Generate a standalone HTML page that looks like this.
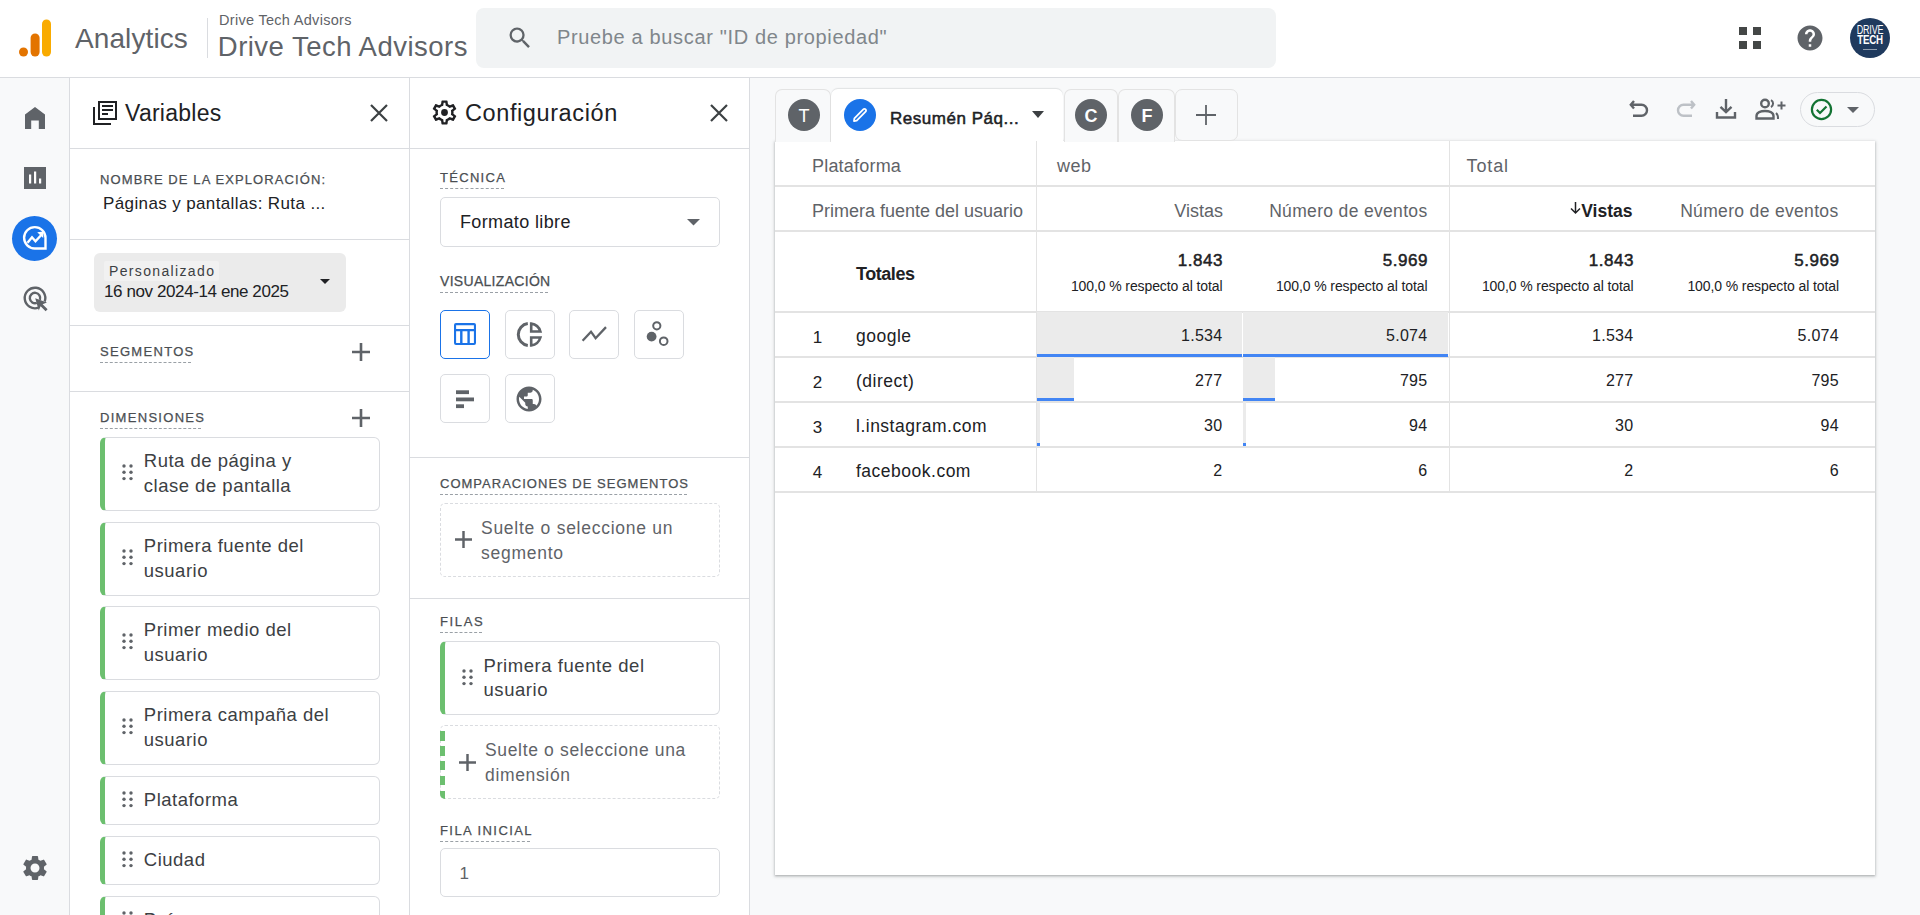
<!DOCTYPE html>
<html lang="es">
<head>
<meta charset="utf-8">
<title>Analytics</title>
<style>
*{box-sizing:border-box;margin:0;padding:0}
html,body{width:1920px;height:915px;overflow:hidden;background:#fff;font-family:"Liberation Sans",sans-serif;color:#202124}
.abs{position:absolute}
.t{position:absolute;white-space:nowrap}
.med{-webkit-text-stroke:0.25px currentColor}
.med5{-webkit-text-stroke:0.5px currentColor}
svg{position:absolute;overflow:visible}
</style>
</head>
<body>

<div class="abs" style="left:0px;top:0px;width:1920px;height:77px;background:#fff"></div>
<div class="abs" style="left:0px;top:77px;width:1920px;height:1px;background:#dadce0"></div>
<div class="abs" style="left:0px;top:78px;width:69px;height:837px;background:#f8f9fa"></div>
<div class="abs" style="left:69px;top:78px;width:1px;height:837px;background:#dadce0"></div>
<div class="abs" style="left:70px;top:78px;width:339px;height:837px;background:#fff"></div>
<div class="abs" style="left:409px;top:78px;width:1px;height:837px;background:#dadce0"></div>
<div class="abs" style="left:410px;top:78px;width:339px;height:837px;background:#fff"></div>
<div class="abs" style="left:749px;top:78px;width:1px;height:837px;background:#dadce0"></div>
<div class="abs" style="left:750px;top:78px;width:1170px;height:837px;background:#f8f9fa"></div>
<svg style="left:18px;top:19px" width="34" height="38" viewBox="0 0 34 38">
<circle cx="5.5" cy="33" r="4.5" fill="#e37400"/>
<rect x="12.6" y="14.5" width="9" height="23" rx="4.5" fill="#e37400"/>
<rect x="24" y="0.5" width="9" height="37" rx="4.5" fill="#f9ab00"/>
</svg>
<div class="t" style="top:25.20px;font-size:28px;line-height:28px;color:#5f6368;letter-spacing:0.1px;left:75.00px;">Analytics</div>
<div class="abs" style="left:207px;top:18px;width:1px;height:40px;background:#dadce0"></div>
<div class="t" style="top:12.68px;font-size:14.5px;line-height:14.5px;color:#5f6368;letter-spacing:0.3px;left:219.00px;">Drive Tech Advisors</div>
<div class="t" style="top:33.12px;font-size:27.5px;line-height:27.5px;color:#5f6368;letter-spacing:0.48px;left:217.80px;">Drive Tech Advisors</div>
<div class="abs" style="left:476px;top:8px;width:800px;height:60px;background:#f1f3f4;border-radius:8px"></div>
<svg style="left:506px;top:24px" width="28" height="28" viewBox="0 0 24 24"><path fill="#5f6368" d="M15.5 14h-.79l-.28-.27A6.471 6.471 0 0 0 16 9.5 6.5 6.5 0 1 0 9.5 16c1.61 0 3.09-.59 4.23-1.57l.27.28v.79l5 4.99L20.49 19l-4.99-5zm-6 0C7.01 14 5 11.99 5 9.5S7.01 5 9.5 5 14 7.01 14 9.5 11.99 14 9.5 14z"/></svg>
<div class="t" style="top:26.50px;font-size:20px;line-height:20px;color:#80868b;letter-spacing:0.65px;left:557.00px;">Pruebe a buscar "ID de propiedad"</div>
<div class="abs" style="left:1739px;top:27px;width:8px;height:8px;background:#444746"></div>
<div class="abs" style="left:1753px;top:27px;width:8px;height:8px;background:#444746"></div>
<div class="abs" style="left:1739px;top:41px;width:8px;height:8px;background:#444746"></div>
<div class="abs" style="left:1753px;top:41px;width:8px;height:8px;background:#444746"></div>
<svg style="left:1795px;top:23px" width="30" height="30" viewBox="0 0 24 24"><path fill="#5f6368" d="M12 2C6.48 2 2 6.48 2 12s4.48 10 10 10 10-4.48 10-10S17.52 2 12 2zm1 17h-2v-2h2v2zm2.07-7.75l-.9.92C13.45 12.9 13 13.5 13 15h-2v-.5c0-1.1.45-2.1 1.17-2.83l1.24-1.26c.37-.36.59-.86.59-1.41 0-1.1-.9-2-2-2s-2 .9-2 2H8c0-2.21 1.79-4 4-4s4 1.79 4 4c0 .88-.36 1.68-.93 2.25z"/></svg>
<div class="abs" style="left:1850px;top:18px;width:40px;height:40px;background:#1f3a5e;border-radius:50%"></div>
<div class="t" style="left:1850px;top:25px;width:40px;text-align:center;font-size:12.5px;line-height:10px;color:#fff;transform:scaleX(0.72);letter-spacing:-0.3px">DRIVE<br><b style="font-size:13.5px">TECH</b></div>
<div class="abs" style="left:1863px;top:49px;width:14px;height:1px;background:rgba(255,255,255,.5)"></div>
<svg style="left:25px;top:107px" width="20" height="22" viewBox="0 0 20 22"><path fill="#5f6368" d="M0 7.5 L10 0 L20 7.5 V22 H13.8 V13.6 H6.2 V22 H0 Z"/></svg>
<svg style="left:24px;top:167px" width="22" height="22" viewBox="0 0 22 22"><rect width="22" height="22" fill="#5f6368"/><rect x="5" y="7.5" width="2.2" height="9" fill="#fff"/><rect x="10" y="4.5" width="2.2" height="12" fill="#fff"/><rect x="15" y="11.5" width="2.2" height="5" fill="#fff"/></svg>
<div class="abs" style="left:12px;top:216px;width:45px;height:45px;background:#1a73e8;border-radius:50%"></div>
<svg style="left:22px;top:225px" width="26" height="26" viewBox="0 0 26 26">
<path fill="none" stroke="#fff" stroke-width="2.4" stroke-linejoin="miter" d="M23.5 12.8 A10.7 10.7 0 1 0 12.8 23.5 H23.5 Z"/>
<path fill="none" stroke="#fff" stroke-width="2.4" d="M5.5 17.8 L10 12.3 L13.5 16.3 L19.5 9.8"/>
<path fill="#fff" d="M15.2 7.2 L21.6 6.6 L21.2 13 Z"/>
</svg>
<svg style="left:22px;top:285px" width="27" height="27" viewBox="0 0 27 27">
<path fill="none" stroke="#5f6368" stroke-width="2.4" d="M22.7 16.5 A10.3 10.3 0 1 0 16.5 22.7"/>
<path fill="none" stroke="#5f6368" stroke-width="2.4" d="M17.9 14.8 A5.2 5.2 0 1 0 14.8 17.9"/>
<path fill="#5f6368" d="M13.2 13.2 L25 17.4 L20.6 19.3 L25.6 24.3 L23.6 26.3 L18.6 21.3 L16.8 25.6 Z"/>
</svg>
<svg style="left:20px;top:853px" width="30" height="30" viewBox="0 0 24 24"><path fill="#5f6368" d="M19.14 12.94c.04-.3.06-.61.06-.94 0-.32-.02-.64-.07-.94l2.03-1.58a.49.49 0 0 0 .12-.61l-1.92-3.32a.488.488 0 0 0-.59-.22l-2.39.96c-.5-.38-1.03-.7-1.62-.94l-.36-2.54a.484.484 0 0 0-.48-.41h-3.84c-.24 0-.43.17-.47.41l-.36 2.54c-.59.24-1.13.57-1.62.94l-2.39-.96c-.22-.08-.47 0-.59.22L2.74 8.87c-.12.21-.08.47.12.61l2.03 1.58c-.05.3-.09.63-.09.94s.02.64.07.94l-2.03 1.58a.49.49 0 0 0-.12.61l1.92 3.32c.12.22.37.29.59.22l2.39-.96c.5.38 1.03.7 1.62.94l.36 2.54c.05.24.24.41.48.41h3.84c.24 0 .44-.17.47-.41l.36-2.54c.59-.24 1.13-.56 1.62-.94l2.39.96c.22.08.47 0 .59-.22l1.92-3.32c.12-.22.07-.47-.12-.61l-2.01-1.58zM12 15.6c-1.98 0-3.6-1.62-3.6-3.6s1.62-3.6 3.6-3.6 3.6 1.62 3.6 3.6-1.62 3.6-3.6 3.6z"/></svg>
<svg style="left:92px;top:100px" width="26" height="26" viewBox="0 0 26 26">
<path fill="none" stroke="#202124" stroke-width="2" d="M2 7 V24 H19"/>
<rect x="7" y="2" width="17" height="17" fill="none" stroke="#202124" stroke-width="2"/>
<rect x="10" y="5" width="11" height="2" fill="#202124"/>
<rect x="10" y="9" width="11" height="2" fill="#202124"/>
<rect x="10" y="13" width="6" height="2" fill="#202124"/>
</svg>
<div class="t" style="top:102.25px;font-size:23px;line-height:23px;color:#202124;letter-spacing:0.26px;left:125.00px;">Variables</div>
<svg style="left:370px;top:104px" width="18" height="18" viewBox="0 0 18 18"><path stroke="#3c4043" stroke-width="2.2" d="M1 1 L17 17 M17 1 L1 17"/></svg>
<div class="abs" style="left:70px;top:148px;width:339px;height:1px;background:#dadce0"></div>
<div class="t med" style="top:172.65px;font-size:13px;line-height:13px;color:#4a4e52;letter-spacing:1.1px;left:100.00px;">NOMBRE DE LA EXPLORACIÓN:</div>
<div class="t" style="top:194.55px;font-size:17px;line-height:17px;color:#202124;letter-spacing:0.38px;left:103.00px;">Páginas y pantallas: Ruta ...</div>
<div class="abs" style="left:70px;top:239px;width:339px;height:1px;background:#dadce0"></div>
<div class="abs" style="left:94px;top:253px;width:252px;height:59px;background:#ebebeb;border-radius:6px"></div>
<div class="abs" style="left:104px;top:261px;width:115px;height:20px;background:#f1f1f1;border-radius:2px"></div>
<div class="t" style="top:264.10px;font-size:14px;line-height:14px;color:#3c4043;letter-spacing:1.35px;left:109.00px;">Personalizado</div>
<div class="t" style="top:282.55px;font-size:17px;line-height:17px;color:#202124;letter-spacing:-0.4px;left:104.00px;">16 nov 2024-14 ene 2025</div>
<svg style="left:320px;top:279px" width="10" height="6" viewBox="0 0 10 6"><path fill="#202124" d="M0 0 H10 L5 5 Z"/></svg>
<div class="abs" style="left:70px;top:325px;width:339px;height:1px;background:#dadce0"></div>
<div class="t med" style="top:344.95px;font-size:13px;line-height:13px;color:#4a4e52;letter-spacing:1.3px;left:100.00px;">SEGMENTOS</div>
<div class="abs" style="left:100px;top:361.7px;width:91px;height:0;border-top:1.5px dashed #9aa0a6"></div>
<svg style="left:352px;top:343px" width="18" height="18" viewBox="0 0 18 18"><path fill="#5f6368" d="M7.7 0 H10.3 V7.7 H18 V10.3 H10.3 V18 H7.7 V10.3 H0 V7.7 H7.7 Z"/></svg>
<div class="abs" style="left:70px;top:391px;width:339px;height:1px;background:#dadce0"></div>
<div class="t med" style="top:410.95px;font-size:13px;line-height:13px;color:#4a4e52;letter-spacing:1.3px;left:100.00px;">DIMENSIONES</div>
<div class="abs" style="left:100px;top:427.7px;width:101px;height:0;border-top:1.5px dashed #9aa0a6"></div>
<svg style="left:352px;top:409px" width="18" height="18" viewBox="0 0 18 18"><path fill="#5f6368" d="M7.7 0 H10.3 V7.7 H18 V10.3 H10.3 V18 H7.7 V10.3 H0 V7.7 H7.7 Z"/></svg>
<div class="abs" style="left:100px;top:437px;width:280px;height:74px;background:#fff;border:1px solid #dadce0;border-radius:6px;border-left:5px solid #6cbf6f"></div>
<svg style="left:122px;top:464.4px" width="12" height="17" viewBox="0 0 12 17"><g fill="#5f6368"><circle cx="2" cy="2" r="1.7"/><circle cx="9" cy="2" r="1.7"/><circle cx="2" cy="8.3" r="1.7"/><circle cx="9" cy="8.3" r="1.7"/><circle cx="2" cy="14.6" r="1.7"/><circle cx="9" cy="14.6" r="1.7"/></g></svg>
<div class="t" style="top:452.27px;font-size:18.5px;line-height:18.5px;color:#3c4043;letter-spacing:0.5px;left:143.80px;">Ruta de página y</div>
<div class="t" style="top:476.57px;font-size:18.5px;line-height:18.5px;color:#3c4043;letter-spacing:0.5px;left:143.80px;">clase de pantalla</div>
<div class="abs" style="left:100px;top:522px;width:280px;height:74px;background:#fff;border:1px solid #dadce0;border-radius:6px;border-left:5px solid #6cbf6f"></div>
<svg style="left:122px;top:549.4px" width="12" height="17" viewBox="0 0 12 17"><g fill="#5f6368"><circle cx="2" cy="2" r="1.7"/><circle cx="9" cy="2" r="1.7"/><circle cx="2" cy="8.3" r="1.7"/><circle cx="9" cy="8.3" r="1.7"/><circle cx="2" cy="14.6" r="1.7"/><circle cx="9" cy="14.6" r="1.7"/></g></svg>
<div class="t" style="top:537.27px;font-size:18.5px;line-height:18.5px;color:#3c4043;letter-spacing:0.5px;left:143.80px;">Primera fuente del</div>
<div class="t" style="top:561.57px;font-size:18.5px;line-height:18.5px;color:#3c4043;letter-spacing:0.5px;left:143.80px;">usuario</div>
<div class="abs" style="left:100px;top:606px;width:280px;height:74px;background:#fff;border:1px solid #dadce0;border-radius:6px;border-left:5px solid #6cbf6f"></div>
<svg style="left:122px;top:633.4px" width="12" height="17" viewBox="0 0 12 17"><g fill="#5f6368"><circle cx="2" cy="2" r="1.7"/><circle cx="9" cy="2" r="1.7"/><circle cx="2" cy="8.3" r="1.7"/><circle cx="9" cy="8.3" r="1.7"/><circle cx="2" cy="14.6" r="1.7"/><circle cx="9" cy="14.6" r="1.7"/></g></svg>
<div class="t" style="top:621.27px;font-size:18.5px;line-height:18.5px;color:#3c4043;letter-spacing:0.5px;left:143.80px;">Primer medio del</div>
<div class="t" style="top:645.57px;font-size:18.5px;line-height:18.5px;color:#3c4043;letter-spacing:0.5px;left:143.80px;">usuario</div>
<div class="abs" style="left:100px;top:691px;width:280px;height:74px;background:#fff;border:1px solid #dadce0;border-radius:6px;border-left:5px solid #6cbf6f"></div>
<svg style="left:122px;top:718.4px" width="12" height="17" viewBox="0 0 12 17"><g fill="#5f6368"><circle cx="2" cy="2" r="1.7"/><circle cx="9" cy="2" r="1.7"/><circle cx="2" cy="8.3" r="1.7"/><circle cx="9" cy="8.3" r="1.7"/><circle cx="2" cy="14.6" r="1.7"/><circle cx="9" cy="14.6" r="1.7"/></g></svg>
<div class="t" style="top:706.27px;font-size:18.5px;line-height:18.5px;color:#3c4043;letter-spacing:0.5px;left:143.80px;">Primera campaña del</div>
<div class="t" style="top:730.57px;font-size:18.5px;line-height:18.5px;color:#3c4043;letter-spacing:0.5px;left:143.80px;">usuario</div>
<div class="abs" style="left:100px;top:776px;width:280px;height:49px;background:#fff;border:1px solid #dadce0;border-radius:6px;border-left:5px solid #6cbf6f"></div>
<svg style="left:122px;top:790.9px" width="12" height="17" viewBox="0 0 12 17"><g fill="#5f6368"><circle cx="2" cy="2" r="1.7"/><circle cx="9" cy="2" r="1.7"/><circle cx="2" cy="8.3" r="1.7"/><circle cx="9" cy="8.3" r="1.7"/><circle cx="2" cy="14.6" r="1.7"/><circle cx="9" cy="14.6" r="1.7"/></g></svg>
<div class="t" style="top:790.88px;font-size:18.5px;line-height:18.5px;color:#3c4043;letter-spacing:0.5px;left:143.80px;">Plataforma</div>
<div class="abs" style="left:100px;top:836px;width:280px;height:49px;background:#fff;border:1px solid #dadce0;border-radius:6px;border-left:5px solid #6cbf6f"></div>
<svg style="left:122px;top:850.9px" width="12" height="17" viewBox="0 0 12 17"><g fill="#5f6368"><circle cx="2" cy="2" r="1.7"/><circle cx="9" cy="2" r="1.7"/><circle cx="2" cy="8.3" r="1.7"/><circle cx="9" cy="8.3" r="1.7"/><circle cx="2" cy="14.6" r="1.7"/><circle cx="9" cy="14.6" r="1.7"/></g></svg>
<div class="t" style="top:850.88px;font-size:18.5px;line-height:18.5px;color:#3c4043;letter-spacing:0.5px;left:143.80px;">Ciudad</div>
<div class="abs" style="left:100px;top:896px;width:280px;height:49px;background:#fff;border:1px solid #dadce0;border-radius:6px;border-left:5px solid #6cbf6f"></div>
<svg style="left:122px;top:910.9px" width="12" height="17" viewBox="0 0 12 17"><g fill="#5f6368"><circle cx="2" cy="2" r="1.7"/><circle cx="9" cy="2" r="1.7"/><circle cx="2" cy="8.3" r="1.7"/><circle cx="9" cy="8.3" r="1.7"/><circle cx="2" cy="14.6" r="1.7"/><circle cx="9" cy="14.6" r="1.7"/></g></svg>
<div class="t" style="top:910.88px;font-size:18.5px;line-height:18.5px;color:#3c4043;letter-spacing:0.5px;left:143.80px;">País</div>
<svg style="left:430px;top:98px" width="29" height="29" viewBox="0 0 24 24"><path fill="#202124" d="M19.43 12.98c.04-.32.07-.64.07-.98s-.03-.66-.07-.98l2.11-1.65c.19-.15.24-.42.12-.64l-2-3.46a.5.5 0 0 0-.61-.22l-2.49 1c-.52-.4-1.08-.73-1.69-.98l-.38-2.65A.488.488 0 0 0 14 2h-4c-.25 0-.46.18-.49.42l-.38 2.65c-.61.25-1.17.59-1.69.98l-2.49-1a.566.566 0 0 0-.18-.03c-.17 0-.34.09-.43.25l-2 3.46c-.13.22-.07.49.12.64l2.11 1.65c-.04.32-.07.65-.07.98s.03.66.07.98l-2.11 1.65c-.19.15-.24.42-.12.64l2 3.46a.5.5 0 0 0 .61.22l2.49-1c.52.4 1.08.73 1.69.98l.38 2.65c.03.24.24.42.49.42h4c.25 0 .46-.18.49-.42l.38-2.65c.61-.25 1.17-.59 1.69-.98l2.49 1c.06.02.12.03.18.03.17 0 .34-.09.43-.25l2-3.46c.12-.22.07-.49-.12-.64l-2.11-1.65zm-1.98-1.71c.04.31.05.52.05.73 0 .21-.02.43-.05.73l-.14 1.13.89.7 1.08.84-.7 1.21-1.27-.51-1.04-.42-.9.68c-.43.32-.84.56-1.25.73l-1.06.43-.16 1.13-.2 1.35h-1.4l-.19-1.35-.16-1.13-1.06-.43c-.43-.18-.83-.41-1.23-.71l-.91-.7-1.06.43-1.27.51-.7-1.21 1.08-.84.89-.7-.14-1.13c-.03-.31-.05-.54-.05-.74s.02-.43.05-.73l.14-1.13-.89-.7-1.08-.84.7-1.21 1.27.51 1.04.42.9-.68c.43-.32.84-.56 1.25-.73l1.06-.43.16-1.13.2-1.35h1.39l.19 1.35.16 1.13 1.06.43c.43.18.83.41 1.23.71l.91.7 1.06-.43 1.27-.51.7 1.21-1.07.85-.89.7.14 1.13z"/><circle cx="12" cy="12" r="2.8" fill="#202124"/></svg>
<div class="t" style="top:101.62px;font-size:23.5px;line-height:23.5px;color:#202124;letter-spacing:0.6px;left:465.00px;">Configuración</div>
<svg style="left:710px;top:104px" width="18" height="18" viewBox="0 0 18 18"><path stroke="#3c4043" stroke-width="2.2" d="M1 1 L17 17 M17 1 L1 17"/></svg>
<div class="abs" style="left:410px;top:148px;width:339px;height:1px;background:#dadce0"></div>
<div class="t med" style="top:170.95px;font-size:13px;line-height:13px;color:#4a4e52;letter-spacing:1.3px;left:440.00px;">TÉCNICA</div>
<div class="abs" style="left:440px;top:187.7px;width:64px;height:0;border-top:1.5px dashed #9aa0a6"></div>
<div class="abs" style="left:440px;top:197px;width:280px;height:50px;background:#fff;border:1px solid #dadce0;border-radius:5px"></div>
<div class="t" style="top:212.90px;font-size:18px;line-height:18px;color:#202124;letter-spacing:0.37px;left:460.00px;">Formato libre</div>
<svg style="left:687px;top:219px" width="13" height="7" viewBox="0 0 13 7"><path fill="#5f6368" d="M0 0 H13 L6.5 6.5 Z"/></svg>
<div class="t med" style="top:274.10px;font-size:14px;line-height:14px;color:#4a4e52;letter-spacing:0.3px;left:440.00px;">VISUALIZACIÓN</div>
<div class="abs" style="left:440px;top:291.5px;width:108px;height:0;border-top:1.5px dashed #9aa0a6"></div>
<div class="abs" style="left:440px;top:310px;width:50px;height:49px;background:#fff;border:1px solid #1a73e8;border-radius:5px"></div>
<div class="abs" style="left:505px;top:310px;width:50px;height:49px;background:#fff;border:1px solid #dadce0;border-radius:5px"></div>
<div class="abs" style="left:569px;top:310px;width:50px;height:49px;background:#fff;border:1px solid #dadce0;border-radius:5px"></div>
<div class="abs" style="left:634px;top:310px;width:50px;height:49px;background:#fff;border:1px solid #dadce0;border-radius:5px"></div>
<div class="abs" style="left:440px;top:374px;width:50px;height:49px;background:#fff;border:1px solid #dadce0;border-radius:5px"></div>
<div class="abs" style="left:505px;top:374px;width:50px;height:49px;background:#fff;border:1px solid #dadce0;border-radius:5px"></div>
<svg style="left:453.9px;top:322.9px" width="22" height="22" viewBox="0 0 22 22"><path fill="#1a73e8" fill-rule="evenodd" d="M2 0 H20 Q22 0 22 2 V20 Q22 22 20 22 H2 Q0 22 0 20 V2 Q0 0 2 0 Z M2.1 2.3 H19.9 V6.1 H2.1 Z M2.1 8.3 H6.1 V19.9 H2.1 Z M8.5 8.3 H13.4 V19.9 H8.5 Z M15.8 8.3 H19.9 V19.9 H15.8 Z"/></svg>
<svg style="left:516.8px;top:321.7px" width="25" height="25" viewBox="0 0 25 25"><g fill="none" stroke="#5f6368" stroke-width="3"><path d="M10.8 1.6 A11 11 0 0 0 10.8 23.4"/><path d="M14.2 1.6 V9.5 H23.4 A11 11 0 0 0 14.2 1.6 Z" stroke-width="2.6"/><path d="M14.2 23.4 V15.5 H23.4 A11 11 0 0 1 14.2 23.4 Z" stroke-width="2.6"/></g></svg>
<svg style="left:580px;top:325px" width="28" height="18" viewBox="0 0 28 18"><path fill="none" stroke="#5f6368" stroke-width="2.3" d="M2.6 15.8 L11 6.7 L15.6 13.2 L26 2.1"/></svg>
<svg style="left:645px;top:319px" width="26" height="28" viewBox="0 0 26 28"><circle cx="11.8" cy="6.8" r="3.6" fill="none" stroke="#5f6368" stroke-width="2"/><circle cx="6.6" cy="17.6" r="4.9" fill="#5f6368"/><circle cx="18.7" cy="22.2" r="3.8" fill="none" stroke="#5f6368" stroke-width="2"/></svg>
<svg style="left:453px;top:387px" width="24" height="24" viewBox="0 0 24 24"><rect x="3" y="3.3" width="13" height="3.8" fill="#5f6368"/><rect x="3" y="10.5" width="18" height="3.8" fill="#5f6368"/><rect x="3" y="17.3" width="8" height="3.8" fill="#5f6368"/></svg>
<svg style="left:513.5px;top:384.2px" width="30" height="30" viewBox="0 0 24 24"><path fill="#5f6368" d="M12 2C6.48 2 2 6.48 2 12s4.48 10 10 10 10-4.48 10-10S17.52 2 12 2zm-1 17.93c-3.95-.49-7-3.85-7-7.93 0-.62.08-1.21.21-1.79L9 15v1c0 1.1.9 2 2 2v1.93zm6.9-2.54c-.26-.81-1-1.39-1.9-1.39h-1v-3c0-.55-.45-1-1-1H8v-2h2c.55 0 1-.45 1-1V7h2c1.1 0 2-.9 2-2v-.41c2.93 1.19 5 4.06 5 7.41 0 2.08-.8 3.97-2.1 5.39z"/></svg>
<div class="abs" style="left:410px;top:457px;width:339px;height:1px;background:#dadce0"></div>
<div class="t med" style="top:476.95px;font-size:13px;line-height:13px;color:#4a4e52;letter-spacing:1.01px;left:440.00px;">COMPARACIONES DE SEGMENTOS</div>
<div class="abs" style="left:440px;top:493.7px;width:247px;height:0;border-top:1.5px dashed #9aa0a6"></div>
<div class="abs" style="left:440px;top:503px;width:280px;height:74px;background:#fff;border:1px dashed #dadce0;border-radius:5px"></div>
<svg style="left:455px;top:531px" width="17" height="17" viewBox="0 0 18 18"><path fill="#5f6368" d="M7.7 0 H10.3 V7.7 H18 V10.3 H10.3 V18 H7.7 V10.3 H0 V7.7 H7.7 Z"/></svg>
<div class="t" style="top:520.33px;font-size:17.5px;line-height:17.5px;color:#5f6368;letter-spacing:0.73px;left:481.00px;">Suelte o seleccione un</div>
<div class="t" style="top:544.73px;font-size:17.5px;line-height:17.5px;color:#5f6368;letter-spacing:0.73px;left:481.00px;">segmento</div>
<div class="abs" style="left:410px;top:598px;width:339px;height:1px;background:#dadce0"></div>
<div class="t med" style="top:614.95px;font-size:13px;line-height:13px;color:#4a4e52;letter-spacing:1.65px;left:440.00px;">FILAS</div>
<div class="abs" style="left:440px;top:631.7px;width:42px;height:0;border-top:1.5px dashed #9aa0a6"></div>
<div class="abs" style="left:440px;top:641px;width:280px;height:74px;background:#fff;border:1px solid #dadce0;border-radius:6px;border-left:5px solid #6cbf6f"></div>
<svg style="left:462px;top:669px" width="12" height="17" viewBox="0 0 12 17"><g fill="#5f6368"><circle cx="2" cy="2" r="1.7"/><circle cx="9" cy="2" r="1.7"/><circle cx="2" cy="8.3" r="1.7"/><circle cx="9" cy="8.3" r="1.7"/><circle cx="2" cy="14.6" r="1.7"/><circle cx="9" cy="14.6" r="1.7"/></g></svg>
<div class="t" style="top:656.98px;font-size:18.5px;line-height:18.5px;color:#3c4043;letter-spacing:0.55px;left:483.50px;">Primera fuente del</div>
<div class="t" style="top:681.48px;font-size:18.5px;line-height:18.5px;color:#3c4043;letter-spacing:0.55px;left:483.50px;">usuario</div>
<div class="abs" style="left:440px;top:725px;width:280px;height:74px;background:#fff;border:1px dashed #dadce0;border-radius:5px"></div>
<div class="abs" style="left:440px;top:731px;width:5px;height:68px;background:repeating-linear-gradient(to bottom,#6cbf6f 0,#6cbf6f 9.5px,transparent 9.5px,transparent 15px);border-bottom-left-radius:5px"></div>
<svg style="left:459px;top:754px" width="17" height="17" viewBox="0 0 18 18"><path fill="#5f6368" d="M7.7 0 H10.3 V7.7 H18 V10.3 H10.3 V18 H7.7 V10.3 H0 V7.7 H7.7 Z"/></svg>
<div class="t" style="top:742.33px;font-size:17.5px;line-height:17.5px;color:#5f6368;letter-spacing:0.66px;left:485.00px;">Suelte o seleccione una</div>
<div class="t" style="top:767.33px;font-size:17.5px;line-height:17.5px;color:#5f6368;letter-spacing:0.66px;left:485.00px;">dimensión</div>
<div class="t med" style="top:823.95px;font-size:13px;line-height:13px;color:#4a4e52;letter-spacing:1.43px;left:440.00px;">FILA INICIAL</div>
<div class="abs" style="left:440px;top:840.7px;width:90px;height:0;border-top:1.5px dashed #9aa0a6"></div>
<div class="abs" style="left:440px;top:848px;width:280px;height:49px;background:#fff;border:1px solid #dadce0;border-radius:5px"></div>
<div class="t" style="top:865.35px;font-size:17px;line-height:17px;color:#5f6368;left:459.50px;">1</div>
<svg style="left:1628px;top:97px" width="24" height="24" viewBox="0 0 24 24"><path fill="none" stroke="#5f6368" stroke-width="2.4" d="M6 4 L2.8 7.8 L6 11.6 M2.8 7.8 H13.5 A5.5 5.5 0 0 1 13.5 18.8 H5"/></svg>
<svg style="left:1673px;top:97px" width="24" height="24" viewBox="0 0 24 24"><path fill="none" stroke="#bdc1c6" stroke-width="2.4" d="M18 4 L21.2 7.8 L18 11.6 M21.2 7.8 H10.5 A5.5 5.5 0 0 0 10.5 18.8 H19"/></svg>
<svg style="left:1714px;top:97px" width="24" height="24" viewBox="0 0 24 24"><path fill="none" stroke="#5f6368" stroke-width="2.4" d="M12 2 V15 M6.5 9.8 L12 15 L17.5 9.8 M3 15 V20.5 H21 V15"/></svg>
<svg style="left:1755px;top:98px" width="32" height="22" viewBox="0 0 32 22"><circle cx="10" cy="5.5" r="3.8" fill="none" stroke="#5f6368" stroke-width="2.4"/><path fill="none" stroke="#5f6368" stroke-width="2.4" d="M1.5 20.5 V18 C1.5 14.5 6 13 10 13 C14 13 18.5 14.5 18.5 18 V20.5 Z"/><path fill="none" stroke="#5f6368" stroke-width="2" d="M16 2 A4 4 0 0 1 16 9 M21 15 A4 6 0 0 1 23 21"/><path fill="#5f6368" d="M25.5 3.5 H27.5 V6.5 H30.5 V8.5 H27.5 V11.5 H25.5 V8.5 H22.5 V6.5 H25.5 Z"/></svg>
<div class="abs" style="left:1800px;top:92px;width:75px;height:35px;background:#f8f9fa;border:1px solid #dadce0;border-radius:18px"></div>
<svg style="left:1810px;top:98px" width="23" height="23" viewBox="0 0 23 23"><circle cx="11.5" cy="11.5" r="9.6" fill="none" stroke="#137333" stroke-width="2.2"/><path fill="none" stroke="#137333" stroke-width="2.2" d="M6.8 11.8 L10 15 L16.5 8.5"/></svg>
<svg style="left:1847px;top:107px" width="12" height="6" viewBox="0 0 12 6"><path fill="#5f6368" d="M0 0 H12 L6 6 Z"/></svg>
<div class="abs" style="left:775px;top:141px;width:1100px;height:734px;background:#fff;box-shadow:0 1px 2px rgba(60,64,67,.3),0 1px 3px 1px rgba(60,64,67,.15)"></div>
<div class="abs" style="left:775px;top:89px;width:56px;height:53px;background:#f8f9fa;border:1px solid #e3e3e3;border-bottom:none;border-radius:7px 7px 0 0"></div>
<div class="abs" style="left:831px;top:89px;width:232px;height:53px;background:#fff;border-radius:7px 7px 0 0;box-shadow:0 -1px 1px rgba(60,64,67,.12)"></div>
<div class="abs" style="left:1064px;top:89px;width:54px;height:53px;background:#f8f9fa;border:1px solid #e3e3e3;border-bottom:none;border-radius:7px 7px 0 0"></div>
<div class="abs" style="left:1118px;top:89px;width:57px;height:53px;background:#f8f9fa;border:1px solid #e3e3e3;border-bottom:none;border-radius:7px 7px 0 0"></div>
<div class="abs" style="left:1175px;top:89px;width:63px;height:51.5px;background:#f8f9fa;border:1px solid #e3e3e3;border-radius:7px"></div>
<div class="abs" style="left:788px;top:99px;width:32px;height:32px;background:#5f6368;border-radius:50%"></div>
<div class="t" style="top:106.70px;font-size:18px;line-height:18px;color:#fff;left:604.00px;width:400px;text-align:center;">T</div>
<div class="abs" style="left:844px;top:99px;width:32px;height:32px;background:#1a73e8;border-radius:50%"></div>
<svg style="left:851px;top:106px" width="18" height="18" viewBox="0 0 18 18"><path fill="none" stroke="#fff" stroke-width="1.8" stroke-linejoin="round" d="M3 15 L3.4 12.3 L12.3 3.4 A1.4 1.4 0 0 1 14.6 5.7 L5.7 14.6 Z"/></svg>
<div class="t med5" style="top:110.30px;font-size:17px;line-height:17px;color:#202124;letter-spacing:0.52px;left:890.00px;">Resumén Páq...</div>
<svg style="left:1032px;top:111px" width="12" height="7" viewBox="0 0 12 7"><path fill="#3c4043" d="M0 0 H12 L6 7 Z"/></svg>
<div class="abs" style="left:1075px;top:99px;width:32px;height:32px;background:#5f6368;border-radius:50%"></div>
<div class="t" style="top:107.20px;font-size:18px;line-height:18px;color:#fff;font-weight:700;left:891.00px;width:400px;text-align:center;">C</div>
<div class="abs" style="left:1131px;top:99px;width:32px;height:32px;background:#5f6368;border-radius:50%"></div>
<div class="t" style="top:107.20px;font-size:18px;line-height:18px;color:#fff;font-weight:700;left:947.00px;width:400px;text-align:center;">F</div>
<svg style="left:1196px;top:105px" width="20" height="20" viewBox="0 0 20 20"><path fill="#5f6368" d="M9.1 0 H10.9 V9.1 H20 V10.9 H10.9 V20 H9.1 V10.9 H0 V9.1 H9.1 Z"/></svg>
<div class="abs" style="left:1036px;top:141px;width:1px;height:351px;background:#e3e3e3"></div>
<div class="abs" style="left:1449px;top:141px;width:1px;height:351px;background:#e3e3e3"></div>
<div class="abs" style="left:775px;top:185px;width:1100px;height:2px;background:#e3e3e3"></div>
<div class="abs" style="left:775px;top:230px;width:1100px;height:2px;background:#e3e3e3"></div>
<div class="abs" style="left:775px;top:311px;width:1100px;height:2px;background:#e3e3e3"></div>
<div class="abs" style="left:775px;top:356px;width:1100px;height:2px;background:#e3e3e3"></div>
<div class="abs" style="left:775px;top:401px;width:1100px;height:2px;background:#e3e3e3"></div>
<div class="abs" style="left:775px;top:446px;width:1100px;height:2px;background:#e3e3e3"></div>
<div class="abs" style="left:775px;top:491px;width:1100px;height:2px;background:#e3e3e3"></div>
<div class="t" style="top:156.70px;font-size:18px;line-height:18px;color:#5f6368;letter-spacing:0.2px;left:812.00px;">Plataforma</div>
<div class="t" style="top:156.70px;font-size:18px;line-height:18px;color:#5f6368;letter-spacing:0.5px;left:1057.00px;">web</div>
<div class="t" style="top:156.70px;font-size:18px;line-height:18px;color:#5f6368;letter-spacing:0.9px;left:1466.50px;">Total</div>
<div class="t" style="top:201.70px;font-size:18px;line-height:18px;color:#5f6368;left:812.00px;">Primera fuente del usuario</div>
<div class="t" style="top:202.30px;font-size:18px;line-height:18px;color:#5f6368;right:697.00px;text-align:right;">Vistas</div>
<div class="t" style="top:203.12px;font-size:17.5px;line-height:17.5px;color:#5f6368;letter-spacing:0.33px;right:492.50px;text-align:right;">Número de eventos</div>
<div class="t" style="top:202.72px;font-size:17.5px;line-height:17.5px;color:#202124;font-weight:700;right:287.50px;text-align:right;">Vistas</div>
<svg style="left:1570px;top:202px" width="11" height="12" viewBox="0 0 11 12"><path fill="none" stroke="#202124" stroke-width="1.5" d="M5.5 0 V11 M1 6.5 L5.5 11 L10 6.5"/></svg>
<div class="t" style="top:203.12px;font-size:17.5px;line-height:17.5px;color:#5f6368;letter-spacing:0.33px;right:81.50px;text-align:right;">Número de eventos</div>
<div class="t" style="top:264.70px;font-size:18px;line-height:18px;color:#202124;font-weight:700;letter-spacing:-0.45px;left:856.00px;">Totales</div>
<div class="t med5" style="top:252.05px;font-size:17px;line-height:17px;color:#202124;letter-spacing:0.55px;right:697.00px;text-align:right;">1.843</div>
<div class="t" style="top:279.30px;font-size:14px;line-height:14px;color:#202124;letter-spacing:-0.1px;right:697.50px;text-align:right;">100,0 % respecto al total</div>
<div class="t med5" style="top:252.05px;font-size:17px;line-height:17px;color:#202124;letter-spacing:0.55px;right:492.00px;text-align:right;">5.969</div>
<div class="t" style="top:279.30px;font-size:14px;line-height:14px;color:#202124;letter-spacing:-0.1px;right:492.50px;text-align:right;">100,0 % respecto al total</div>
<div class="t med5" style="top:252.05px;font-size:17px;line-height:17px;color:#202124;letter-spacing:0.55px;right:286.00px;text-align:right;">1.843</div>
<div class="t" style="top:279.30px;font-size:14px;line-height:14px;color:#202124;letter-spacing:-0.1px;right:286.50px;text-align:right;">100,0 % respecto al total</div>
<div class="t med5" style="top:252.05px;font-size:17px;line-height:17px;color:#202124;letter-spacing:0.55px;right:80.50px;text-align:right;">5.969</div>
<div class="t" style="top:279.30px;font-size:14px;line-height:14px;color:#202124;letter-spacing:-0.1px;right:81.00px;text-align:right;">100,0 % respecto al total</div>
<div class="abs" style="left:1037px;top:312px;width:205px;height:45px;background:#ebebeb"></div>
<div class="abs" style="left:1037px;top:354px;width:205px;height:3px;background:#4285f4"></div>
<div class="abs" style="left:1243px;top:312px;width:205px;height:45px;background:#ebebeb"></div>
<div class="abs" style="left:1243px;top:354px;width:205px;height:3px;background:#4285f4"></div>
<div class="abs" style="left:1037px;top:357px;width:37px;height:42px;background:#ebebeb"></div>
<div class="abs" style="left:1037px;top:398px;width:37px;height:3px;background:#4285f4"></div>
<div class="abs" style="left:1243px;top:357px;width:32px;height:42px;background:#ebebeb"></div>
<div class="abs" style="left:1243px;top:398px;width:32px;height:3px;background:#4285f4"></div>
<div class="abs" style="left:1037px;top:402px;width:3px;height:42px;background:#ebebeb"></div>
<div class="abs" style="left:1037px;top:443px;width:3px;height:3px;background:#4285f4"></div>
<div class="abs" style="left:1243px;top:402px;width:3px;height:42px;background:#ebebeb"></div>
<div class="abs" style="left:1243px;top:443px;width:3px;height:3px;background:#4285f4"></div>
<div class="t" style="top:328.55px;font-size:17px;line-height:17px;color:#202124;left:617.50px;width:400px;text-align:center;">1</div>
<div class="t" style="top:328.12px;font-size:17.5px;line-height:17.5px;color:#202124;letter-spacing:0.5px;left:856.00px;">google</div>
<div class="t" style="top:327.60px;font-size:16px;line-height:16px;color:#202124;letter-spacing:0.3px;right:697.50px;text-align:right;">1.534</div>
<div class="t" style="top:327.60px;font-size:16px;line-height:16px;color:#202124;letter-spacing:0.3px;right:492.50px;text-align:right;">5.074</div>
<div class="t" style="top:327.60px;font-size:16px;line-height:16px;color:#202124;letter-spacing:0.3px;right:286.50px;text-align:right;">1.534</div>
<div class="t" style="top:327.60px;font-size:16px;line-height:16px;color:#202124;letter-spacing:0.3px;right:81.00px;text-align:right;">5.074</div>
<div class="t" style="top:373.55px;font-size:17px;line-height:17px;color:#202124;left:617.50px;width:400px;text-align:center;">2</div>
<div class="t" style="top:373.12px;font-size:17.5px;line-height:17.5px;color:#202124;letter-spacing:0.5px;left:856.00px;">(direct)</div>
<div class="t" style="top:372.60px;font-size:16px;line-height:16px;color:#202124;letter-spacing:0.3px;right:697.50px;text-align:right;">277</div>
<div class="t" style="top:372.60px;font-size:16px;line-height:16px;color:#202124;letter-spacing:0.3px;right:492.50px;text-align:right;">795</div>
<div class="t" style="top:372.60px;font-size:16px;line-height:16px;color:#202124;letter-spacing:0.3px;right:286.50px;text-align:right;">277</div>
<div class="t" style="top:372.60px;font-size:16px;line-height:16px;color:#202124;letter-spacing:0.3px;right:81.00px;text-align:right;">795</div>
<div class="t" style="top:418.55px;font-size:17px;line-height:17px;color:#202124;left:617.50px;width:400px;text-align:center;">3</div>
<div class="t" style="top:418.12px;font-size:17.5px;line-height:17.5px;color:#202124;letter-spacing:0.5px;left:856.00px;">l.instagram.com</div>
<div class="t" style="top:417.60px;font-size:16px;line-height:16px;color:#202124;letter-spacing:0.3px;right:697.50px;text-align:right;">30</div>
<div class="t" style="top:417.60px;font-size:16px;line-height:16px;color:#202124;letter-spacing:0.3px;right:492.50px;text-align:right;">94</div>
<div class="t" style="top:417.60px;font-size:16px;line-height:16px;color:#202124;letter-spacing:0.3px;right:286.50px;text-align:right;">30</div>
<div class="t" style="top:417.60px;font-size:16px;line-height:16px;color:#202124;letter-spacing:0.3px;right:81.00px;text-align:right;">94</div>
<div class="t" style="top:463.55px;font-size:17px;line-height:17px;color:#202124;left:617.50px;width:400px;text-align:center;">4</div>
<div class="t" style="top:463.12px;font-size:17.5px;line-height:17.5px;color:#202124;letter-spacing:0.5px;left:856.00px;">facebook.com</div>
<div class="t" style="top:462.60px;font-size:16px;line-height:16px;color:#202124;letter-spacing:0.3px;right:697.50px;text-align:right;">2</div>
<div class="t" style="top:462.60px;font-size:16px;line-height:16px;color:#202124;letter-spacing:0.3px;right:492.50px;text-align:right;">6</div>
<div class="t" style="top:462.60px;font-size:16px;line-height:16px;color:#202124;letter-spacing:0.3px;right:286.50px;text-align:right;">2</div>
<div class="t" style="top:462.60px;font-size:16px;line-height:16px;color:#202124;letter-spacing:0.3px;right:81.00px;text-align:right;">6</div>
</body>
</html>
